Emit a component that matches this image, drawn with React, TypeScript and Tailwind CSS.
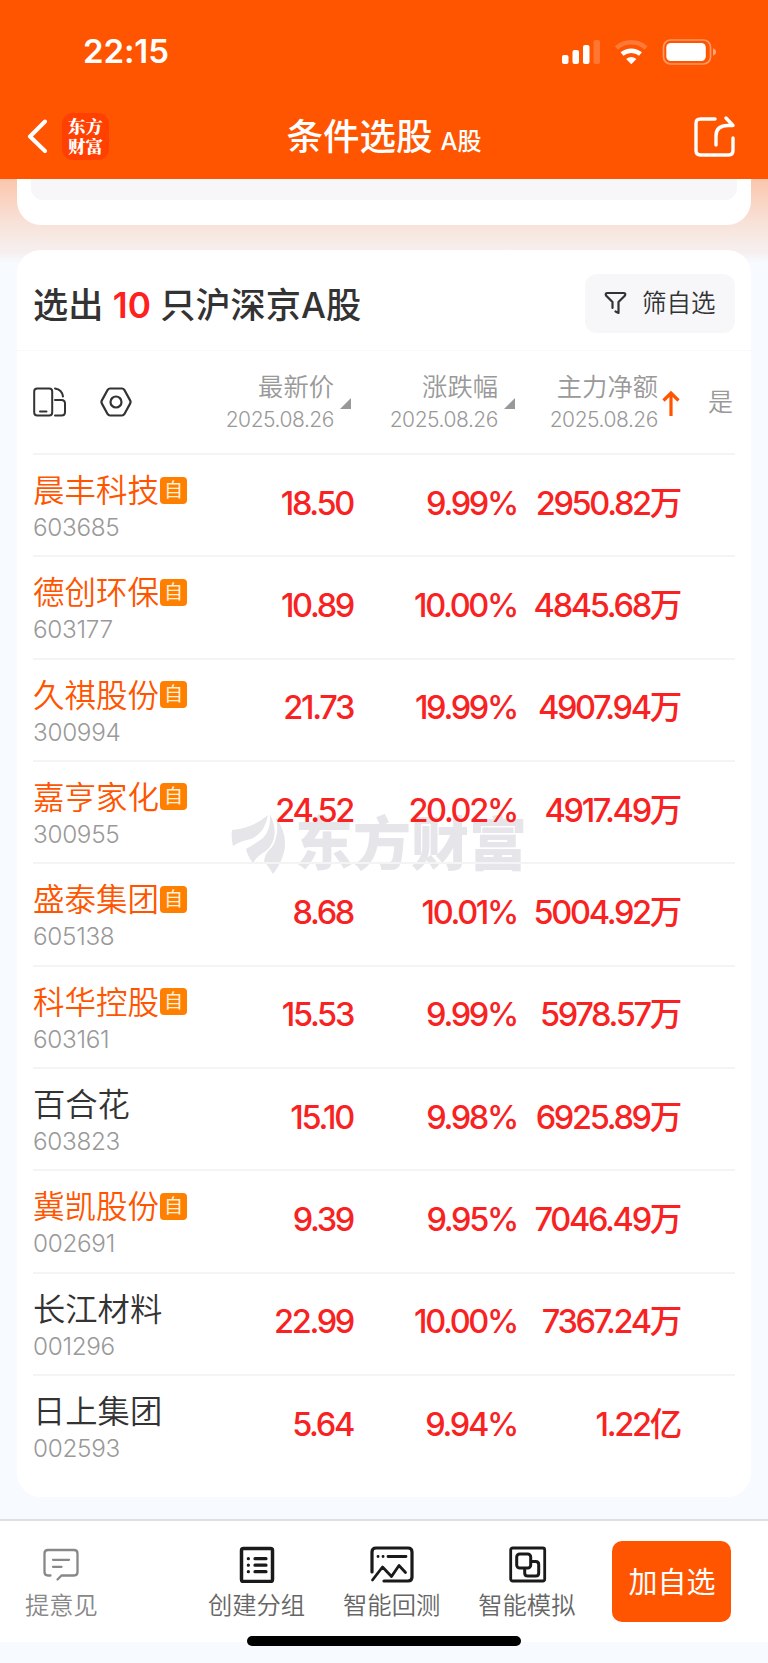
import React from "react";
import clsx from "clsx";

interface Stock {
  name: string;
  code: string;
  price: string;
  change: string;
  inflow: string;
  watched: boolean;
}

const stocks: Stock[] = [
  { name: "晨丰科技", code: "603685", price: "18.50", change: "9.99%", inflow: "2950.82万", watched: true },
  { name: "德创环保", code: "603177", price: "10.89", change: "10.00%", inflow: "4845.68万", watched: true },
  { name: "久祺股份", code: "300994", price: "21.73", change: "19.99%", inflow: "4907.94万", watched: true },
  { name: "嘉亨家化", code: "300955", price: "24.52", change: "20.02%", inflow: "4917.49万", watched: true },
  { name: "盛泰集团", code: "605138", price: "8.68", change: "10.01%", inflow: "5004.92万", watched: true },
  { name: "科华控股", code: "603161", price: "15.53", change: "9.99%", inflow: "5978.57万", watched: true },
  { name: "百合花", code: "603823", price: "15.10", change: "9.98%", inflow: "6925.89万", watched: false },
  { name: "冀凯股份", code: "002691", price: "9.39", change: "9.95%", inflow: "7046.49万", watched: true },
  { name: "长江材料", code: "001296", price: "22.99", change: "10.00%", inflow: "7367.24万", watched: false },
  { name: "日上集团", code: "002593", price: "5.64", change: "9.94%", inflow: "1.22亿", watched: false },
];

function StatusBar() {
  return (
    <div className="flex h-[95px] items-center justify-between pt-[8px] pl-[83px] pr-[51px]">
      <span className="text-[33px] leading-none font-semibold tracking-[-0.1px]">22:15</span>
      <svg width="155" height="26" viewBox="0 0 155 26" fill="white">
        <rect x="0" y="16" width="6.500" height="9" rx="2" />
        <rect x="10.500" y="11" width="6.500" height="14" rx="2" />
        <rect x="21" y="6" width="6.500" height="19" rx="2" />
        <rect x="31.500" y="1" width="6.500" height="24" rx="2" opacity=".2" />
        <g fill="none" stroke="white">
          <path d="M54.500 9a22 22 0 0 1 29.500 0" strokeWidth="4.500" opacity=".22" />
          <path d="M60 15a14.500 14.500 0 0 1 18.500 0" strokeWidth="4.500" />
        </g>
        <path d="M69.300 25.200 64.200 20q5-3.800 10.200 0z" />
        <rect x="101.500" y="1" width="47" height="24" rx="7" fill="none" stroke="white" strokeWidth="1.700" opacity=".4" />
        <rect x="104.300" y="4" width="39.500" height="18" rx="4.500" />
        <path d="M151 9.300q3 1 3 3.700t-3 3.700z" opacity=".45" />
      </svg>
    </div>
  );
}

function NavBar() {
  return (
    <div className="grid h-[84px] grid-cols-[1fr_auto_1fr] items-center">
      <div className="flex items-center pb-px pl-[27px]">
        <svg width="21" height="35" viewBox="0 0 21 35" fill="none" stroke="white" strokeWidth="4" strokeLinecap="round" strokeLinejoin="round">
          <path d="M18 2.500 3 17.500l15 14.500" />
        </svg>
        <div className="ml-[14px] flex h-[47px] w-[47px] flex-col items-center justify-center rounded-[11px] bg-[#ff4000] pb-[2px] font-['Noto_Serif_CJK_SC','Noto_Sans_CJK_SC',serif] text-[17.5px] leading-[19.5px] font-black">
          <span>东方</span>
          <span>财富</span>
        </div>
      </div>
      <h1 className="flex items-baseline">
        <span className="text-[36.5px] leading-[48px] font-medium">条件选股</span>
        <span className="ml-[8px] text-[24px] font-medium">A股</span>
      </h1>
      <div className="flex justify-end pr-[32px]">
        <svg width="42" height="42" viewBox="0 0 42 42" fill="none" stroke="white" strokeWidth="3.400" strokeLinecap="round" strokeLinejoin="round">
          <path d="M21 3H6.500Q2 3 2 7.500v27Q2 39 6.500 39h28q4.500 0 4.500-4.500V22" />
          <path d="M22 29V20Q22 9.500 34 9.500h5L32 2" />
        </svg>
      </div>
    </div>
  );
}

function SortMark() {
  return (
    <svg className="mt-[1px] ml-[6px]" width="11" height="11" viewBox="0 0 11 11" fill="#999">
      <path d="M11 0v11H0z" />
    </svg>
  );
}

function HeadCell({ title, children }: { title: string; children: React.ReactNode }) {
  return (
    <div className="flex items-center justify-end">
      <div className="text-right whitespace-nowrap text-[#999]">
        <div className="text-[25.3px] leading-[34px]">{title}</div>
        <div className="pt-px text-[21px] leading-[30px] font-[350] tracking-[-0.45px]">2025.08.26</div>
      </div>
      {children}
    </div>
  );
}

function TableHead() {
  return (
    <div className="grid h-[104px] grid-cols-[180px_140px_164px_163px_1fr] border-b-2 border-[#f4f4f5] pt-px font-[350]">
      <div className="flex items-center pb-[2px]">
        <svg width="34" height="32" viewBox="0 0 34 32" fill="none" stroke="#333" strokeWidth="2" strokeLinecap="round">
          <rect x="1.200" y="2.500" width="18" height="27" rx="3" />
          <path d="M7 25.500h6.500M22 2.500q7 1 8 8M22 14h6.500q3.500 0 3.500 3.500V26q0 3.500-3.500 3.500H22" />
        </svg>
        <svg className="ml-[33px]" width="32" height="30" viewBox="0 0 32 30" fill="none" stroke="#333" strokeWidth="2.200" strokeLinejoin="round">
          <path d="M10 1.500h12q1.500 0 2.300 1.300l5.800 10.600q.9 1.600 0 3.200l-5.800 10.600q-.8 1.300-2.300 1.300H10q-1.500 0-2.300-1.300L1.900 16.600q-.9-1.600 0-3.200L7.700 2.800Q8.500 1.500 10 1.500z" />
          <circle cx="16" cy="15" r="5.500" />
        </svg>
      </div>
      <HeadCell title="最新价">
        <SortMark />
        <span className="w-[2px]" />
      </HeadCell>
      <HeadCell title="涨跌幅">
        <SortMark />
        <span className="w-[2px]" />
      </HeadCell>
      <HeadCell title="主力净额">
        <svg className="ml-[4px]" width="18" height="26" viewBox="0 0 18 26" fill="none" stroke="#f50" strokeWidth="3.200">
          <path d="M9 26V3M1.500 10.500 9 3l7.500 7.500" />
        </svg>
      </HeadCell>
      <div className="flex items-center justify-end text-[25px] text-[#999]">
        <span className="mr-[2px]">是</span>
      </div>
    </div>
  );
}

function StockRow({ stock, last }: { stock: Stock; last: boolean }) {
  return (
    <div
      className={clsx(
        "grid h-[102.33px] grid-cols-[180px_140px_164px_163px_1fr] border-b-2",
        last ? "border-transparent" : "border-[#f4f4f5]"
      )}
    >
      <div className="pt-[15px] whitespace-nowrap">
        <div className="flex h-[42px] items-center">
          <span
            className={clsx(
              "leading-[42px] font-[350]",
              stock.watched ? "text-[31.5px] text-[#ff5500]" : "text-[32.3px] text-[#333]"
            )}
          >
            {stock.name}
          </span>
          {stock.watched && (
            <span className="mb-[2px] ml-[1px] flex h-[27px] w-[27px] items-center justify-center rounded-[4px] bg-[#ff8000] text-[19px] leading-none text-[#fff0dc]">
              自
            </span>
          )}
        </div>
        <div className="text-[24.3px] leading-[30px] font-[350] tracking-[-0.3px] text-[#999]">{stock.code}</div>
      </div>
      {[stock.price, stock.change, stock.inflow].map((value, i) => (
        <div
          key={i}
          className="flex items-center justify-end pb-[2px] text-[32.5px] font-[550] tracking-[-2.3px] whitespace-nowrap text-[#f82222]"
        >
          <span>{value}</span>
        </div>
      ))}
    </div>
  );
}

function Watermark() {
  return (
    <div className="absolute top-[563px] left-[214px] flex items-center text-[#e5e5ea]">
      <svg width="56" height="62" viewBox="0 0 56 62" fill="currentColor">
        <path d="M1 17Q22 15 37 2 34 20 20 26 9 28 2 33 0 25 1 17z" />
        <path d="M39 1Q50 25 35 38q-9 5-13 12-5-6-7-14 9-5 17-11 8-8 7-24z" />
        <path d="M45 5q12 16 8 34-3 12-11 22-4-7-9-13 1-8 8-14 8-13 4-29z" />
      </svg>
      <span className="ml-[8px] text-[58px] leading-[62px] font-black">东方财富</span>
    </div>
  );
}

function FooterItem({ label, muted, children }: { label: string; muted?: boolean; children: React.ReactNode }) {
  return (
    <div className={clsx("flex flex-col items-center", muted ? "text-[#888]" : "text-[#1a1a1a]")}>
      <svg width="44" height="38" viewBox="0 0 44 38" fill="none" stroke="currentColor" strokeLinecap="round" strokeLinejoin="round">
        {children}
      </svg>
      <span className={clsx("mt-[6px] text-[24.3px] leading-[32px] font-[350] whitespace-nowrap", muted ? "text-[#888]" : "text-[#666]")}>
        {label}
      </span>
    </div>
  );
}

function Footer() {
  return (
    <footer className="h-[144px] border-t-2 border-[#dedfe2] bg-[#f7faff]">
      <div className="flex h-[121px] bg-white pt-[24px] pl-[25px]">
        <FooterItem label="提意见" muted>
          <g strokeWidth="2.300">
            <path d="M11.500 30.500H9q-3.500 0-3.500-3.500V8.500Q5.500 5 9 5h26q3.500 0 3.500 3.500V27q0 3.500-3.500 3.500H22.500L18.500 34.500" />
            <path d="M14 14.800h16M14 21.800h8.500" />
          </g>
        </FooterItem>
        <div className="ml-[110px] flex gap-[38px]">
          <FooterItem label="创建分组">
            <g transform="translate(1 0)">
              <rect x="6.500" y="3.500" width="31" height="33" rx="2" strokeWidth="3.500" />
              <path d="M13.300 13.700h.1M13.300 20.200h.1M13.300 26.700h.1M20 13.700h11M20 20.200h11M20 26.700h11" strokeWidth="3.200" />
            </g>
          </FooterItem>
          <FooterItem label="智能回测">
            <path d="M2 27V7q0-4 4-4h32q4 0 4 4v25q0 4-4 4H14" strokeWidth="3.200" />
            <path d="M8 11.500h.1M13 11.500h.1M18 11.500h18M2.500 35l10-13 9 9.500L29 20.500l6.500 7" strokeWidth="2.800" />
          </FooterItem>
          <FooterItem label="智能模拟">
            <g transform="translate(.7 0)">
              <rect x="5" y="3" width="34" height="33" rx="2" strokeWidth="2.800" />
              <rect x="11" y="9" width="14" height="14" rx="3" strokeWidth="3" />
              <path d="M25.500 16.500H30q3 0 3 3V28q0 3-3 3h-8q-3 0-3-3v-4.500" strokeWidth="3" />
            </g>
          </FooterItem>
        </div>
        <button className="mt-[-4px] ml-[37px] h-[81px] w-[119px] rounded-[10px] bg-[#ff5500] pt-[2px] text-[29px] text-white">
          加自选
        </button>
      </div>
      <div className="relative mx-auto mt-[-6px] h-[10px] w-[274px] rounded-full bg-black" />
    </footer>
  );
}

export default function App() {
  return (
    <div className="flex h-[1663px] w-[768px] flex-col overflow-hidden bg-[#f7faff] font-['Inter','Noto_Sans_CJK_SC',sans-serif]">
      <header className="h-[179px] shrink-0 bg-[#ff5500] text-white">
        <StatusBar />
        <NavBar />
      </header>

      <main className="h-[1340px] shrink-0 bg-[linear-gradient(to_bottom,#fbc6ad_0px,#f8e3da_46px,#f6f0f0_74px,#f7faff_84px)] px-[17px]">
        <div className="h-[46px] rounded-b-[24px] bg-white px-[14px]">
          <div className="h-[21px] rounded-b-[12px] bg-[#f7f7fa]" />
        </div>

        <section className="relative mt-[25px] h-[1247px] rounded-[24px] bg-white">
          <Watermark />
          <div className="relative flex h-[101px] items-center justify-between border-b border-[#f9f9fa] pr-[16px] pl-[16px]">
            <h2 className="pt-[9px] text-[35.2px] leading-[48px] font-medium text-[#333]">
              选出 <span className="font-semibold text-[#ff2020]">10</span> 只沪深京A股
            </h2>
            <button className="mt-[6px] flex h-[59px] w-[150px] items-center rounded-[12px] bg-[#f7f7fa] pl-[19px] text-[24.5px] font-[350] text-[#333]">
              <svg width="23" height="24" viewBox="0 0 23 24" fill="none" stroke="currentColor" strokeWidth="2.200" strokeLinecap="round" strokeLinejoin="round">
                <path d="M8.500 17v-6L2 4.500Q1 2 3.500 2h16Q22 2 21 4.500L14.500 11v11l-3-1.500" />
              </svg>
              <span className="ml-[15px]">筛自选</span>
            </button>
          </div>
          <div className="relative px-[16px]">
            <TableHead />
            {stocks.map((stock, i) => (
              <StockRow key={stock.code} stock={stock} last={i === stocks.length - 1} />
            ))}
          </div>
        </section>
      </main>

      <Footer />
    </div>
  );
}
